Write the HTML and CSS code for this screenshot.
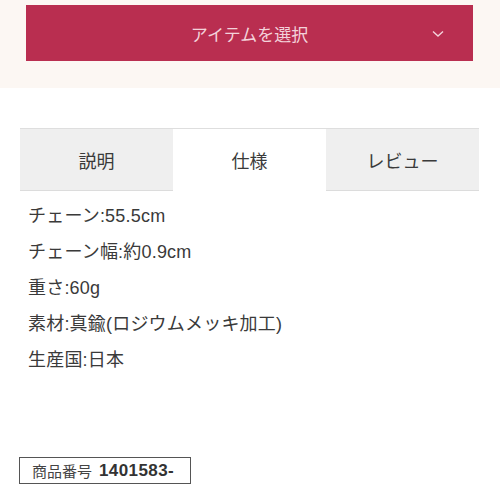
FILE: index.html
```html
<!DOCTYPE html>
<html lang="ja">
<head>
<meta charset="utf-8">
<link rel="stylesheet" href="styles.css">
</head>
<body>
<div class="select-area">
  <div class="select-btn">
    <span class="select-label">アイテムを選択</span>
    <svg class="chev" width="12" height="8" viewBox="0 0 12 8"><path d="M1 1.5 L6 6 L11 1.5" fill="none" stroke="#f4d3db" stroke-width="1.4"/></svg>
  </div>
</div>
<div class="tabs">
  <div class="tab">説明</div>
  <div class="tab active">仕様</div>
  <div class="tab">レビュー</div>
</div>
<ul class="spec">
  <li>チェーン:55.5cm</li>
  <li>チェーン幅:約0.9cm</li>
  <li>重さ:60g</li>
  <li>素材:真鍮(ロジウムメッキ加工)</li>
  <li>生産国:日本</li>
</ul>
<div class="code-box"><span class="code-label">商品番号</span><span class="code-num">1401583-</span></div>
</body>
</html>
```
FILE: styles.css
```css
html, body {
  margin: 0;
  padding: 0;
  background: #ffffff;
  font-family: "Liberation Sans", "Noto Sans CJK JP", sans-serif;
  color: #333333;
}
.select-area {
  background: #fcf7f3;
  padding: 5px 27px 27px 26px;
}
.select-btn {
  height: 56px;
  background: #b92e50;
  display: flex;
  align-items: center;
  justify-content: center;
  position: relative;
}
.select-label {
  color: #f3d2da;
  font-size: 17px;
}
.chev {
  position: absolute;
  right: 29px;
  top: 25px;
}
.tabs {
  margin: 40px 21px 0 20px;
  display: grid;
  grid-template-columns: 153px 153px 153px;
  border-top: 1px solid #dedede;
}
.tab {
  height: 61px;
  display: flex;
  align-items: center;
  justify-content: center;
  background: #efefef;
  border-bottom: 1px solid #dcdcdc;
  font-size: 18px;
  color: #3a3a3a;
}
.tab.active {
  background: #ffffff;
  border-bottom-color: transparent;
}
.spec {
  list-style: none;
  margin: 7px 0 0 28px;
  padding: 0;
}
.spec li {
  font-size: 18px;
  line-height: 36px;
  color: #3a3a3a;
  letter-spacing: 0.2px;
}
.code-box {
  margin: 79px 0 0 19px;
  width: 170px;
  height: 25px;
  border: 1.5px solid #555;
  display: flex;
  align-items: center;
  box-sizing: content-box;
}
.code-label {
  font-size: 15px;
  margin-left: 12px;
  color: #444;
}
.code-num {
  font-size: 17px;
  font-weight: bold;
  margin-left: 7px;
  color: #333;
  letter-spacing: 0.4px;
}
```
